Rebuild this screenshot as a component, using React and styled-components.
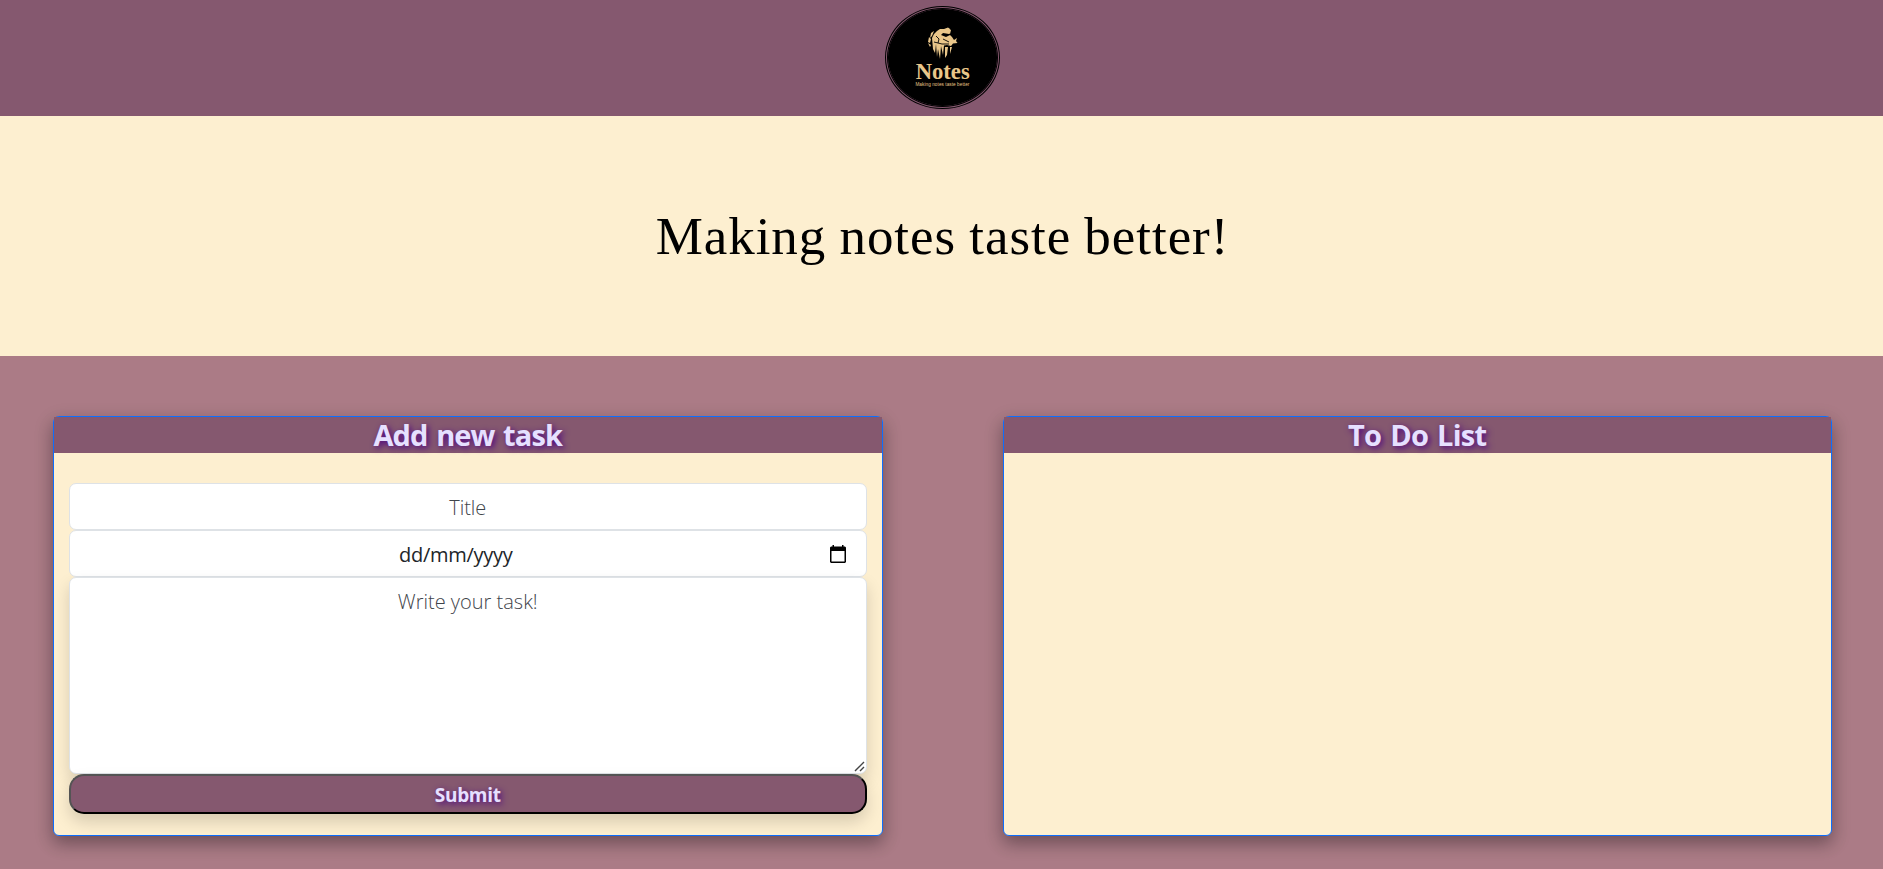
import React from "react";
import styled, { createGlobalStyle } from "styled-components";

const GlobalStyle = createGlobalStyle`
  * { box-sizing: border-box; }
  html, body, #root { height: 100%; }
  body { margin: 0; overflow: hidden; background: #ab7b86; }
`;
const Page = styled.div`
  display: flex; flex-direction: column; height: 869px;
`;
const TopBar = styled.header`
  height: 116px; background: #85586f; display: flex; justify-content: center;
  align-items: flex-start; padding-top: 6px; padding-left: 2px;
`;
const Logo = styled.div`
  width: 115px; height: 103px; border: 3px double #000; border-radius: 50%;
  background: #000; background-clip: content-box; overflow: hidden;
`;
const Hero = styled.section`
  height: 240px; background: #fdefd0; display: flex; align-items: center; justify-content: center;
`;
const Slogan = styled.h1`
  margin: 0; padding: 2px 0 0 2px; font: 400 53px/1.2 "Liberation Serif", serif; color: #000;
  white-space: nowrap; letter-spacing: 0.95px; word-spacing: -1px;
`;
const Board = styled.main`
  flex: 1; display: flex; gap: 120px; padding: 60px 51px 33px 53px; background: #ab7b86;
`;
const Card = styled.section`
  flex: 1; height: 420px; border: 1px solid #0d6efd; border-radius: 6px; background: #fdefd0;
  box-shadow: 0 8px 16px rgba(0, 0, 0, 0.2), 0 6px 20px rgba(0, 0, 0, 0.19);
`;
const CardTitle = styled.h2`
  margin: 0; height: 36px; background: #85586f; color: #e6e0ff; text-align: center;
  font: 700 29px/36px "Open Sans", sans-serif; letter-spacing: ${(p) => p.$spacing};
  word-spacing: 2px; text-shadow: 2px 2px 6px #4b0082;
`;
const Form = styled.form`
  display: flex; flex-direction: column; padding: 30px 15px 0;
`;
const fieldStyle = `
  width: 100%; border: 1px solid #dee2e6; border-radius: 7px; background: #fff;
  font: 300 20px/30px "Open Sans", sans-serif; text-align: center; outline: none;
  &::placeholder { color: #3f454b; opacity: 1; }
`;
const TitleInput = styled.input`
  ${fieldStyle} height: 47px; padding: 9px 15px 7px;
`;
const DateField = styled.div`
  ${fieldStyle} height: 47px; padding: 8px 20px 8px 15px; display: flex; align-items: center; color: #212529;
`;
const DateText = styled.span`
  flex: 1; padding: 2px 3px 0 0; font-weight: 400; letter-spacing: -0.3px;
`;
const TaskArea = styled.div`
  position: relative; height: 197px;
`;
const TaskInput = styled.textarea`
  ${fieldStyle} height: 197px; padding: 9px 15px; display: block; resize: none;
  box-shadow: 0 8px 16px rgba(0, 0, 0, 0.15);
`;
const Grip = styled.svg`
  position: absolute; right: 2px; bottom: 2px; width: 11px; height: 11px; pointer-events: none;
`;
const Submit = styled.button`
  position: relative; height: 40px; border: 2px outset #000; border-radius: 15px; background: #85586f;
  color: #e6e0ff; font: 700 19px/34px "Open Sans", sans-serif; letter-spacing: -0.3px; padding: 2px 0 0;
  text-shadow: 2px 2px 6px #4b0082; box-shadow: 0 8px 16px rgba(0, 0, 0, 0.15);
`;

function LogoArt() {
  return (
    <svg width="109" height="97" viewBox="888 9 109 97">
      <g fill="#e9c68a">
        <path d="M937 31L940 29L944 29L948 27.5L950 29L948 31L950 32L949 34L943 33L941 35L946 37L950 35L952 37L954 40L957 38L956 41L957.5 43L953 43.5L951 46L947 45L944 45.5L943 55L941 46L940 59L938 49L937 57L936 44L935 53L933 49L932 38L934 34Z" />
        <path d="M945 47L948 47L947 55L945 58ZM950 47L952 47L950 54ZM943 31L948 28L951 30L950 34L947 32Z" />
        <path d="M931 33L934 31L932 36L930 38ZM929 37L931 39L930 43L928 42ZM928 43L931 45L930 47Z" />
        <path d="M936 36L939 39L938 43M943 39L949 42M934 42L942 44L949 44" fill="none" stroke="#000" strokeWidth="0.9" />
        <text x="942.7" y="78.5" fontFamily="Liberation Serif, serif" fontWeight="700" fontSize="23.5" textAnchor="middle" textLength="54" lengthAdjust="spacingAndGlyphs">Notes</text>
        <text x="942.4" y="86" fontFamily="Liberation Sans, sans-serif" fontSize="4.7" textAnchor="middle" textLength="54">Making notes taste better</text>
      </g>
    </svg>
  );
}
function CalendarIcon() {
  return (
    <svg width="16" height="18" viewBox="0 0 16 18">
      <path d="M2.5 0H4V1.5H12V0H13.5V1.5H15L16 2.5V17L15 18H1L0 17V2.5L1 1.5H2.5ZM1.5 6V16.5H14.5V6Z" fillRule="evenodd" />
    </svg>
  );
}

export default function App() {
  return (
    <Page>
      <GlobalStyle />
      <TopBar><Logo><LogoArt /></Logo></TopBar>
      <Hero><Slogan>Making notes taste better!</Slogan></Hero>
      <Board>
        <Card>
          <CardTitle $spacing="-0.9px">Add new task</CardTitle>
          <Form>
            <TitleInput placeholder="Title" />
            <DateField><DateText>dd/mm/yyyy</DateText><CalendarIcon /></DateField>
            <TaskArea>
              <TaskInput placeholder="Write your task!" />
              <Grip viewBox="0 0 11 11">
                <path d="M1 10L10 1M6 10L10 6" stroke="#444" strokeWidth="1.4" fill="none" />
              </Grip>
            </TaskArea>
            <Submit type="button">Submit</Submit>
          </Form>
        </Card>
        <Card><CardTitle $spacing="-0.7px">To Do List</CardTitle></Card>
      </Board>
    </Page>
  );
}
